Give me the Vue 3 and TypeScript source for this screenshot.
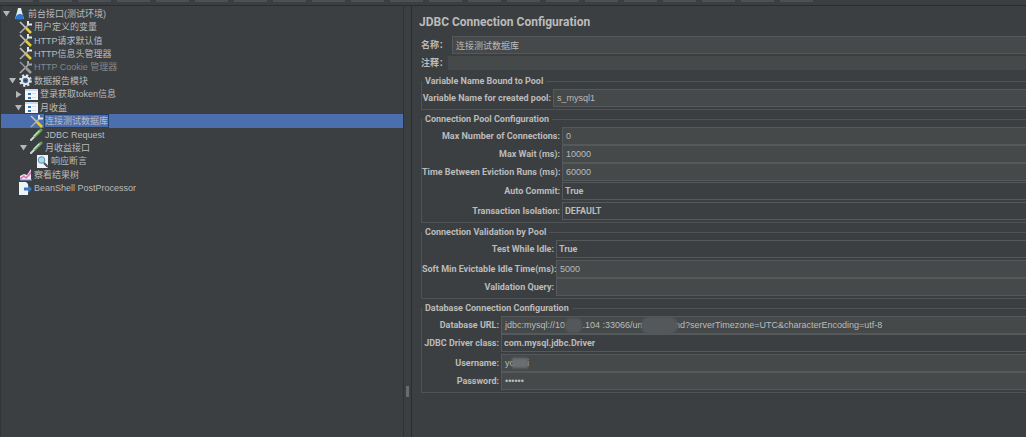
<script setup lang="ts">
import { reactive, ref } from 'vue'

type IconName = 'plan' | 'config' | 'configOff' | 'gear' | 'window' | 'sampler' | 'assert' | 'chart' | 'post'

interface TreeItem {
  label: string
  icon: IconName
  depth: number
  arrow?: 'open' | 'closed'
  disabled?: boolean
}

interface Field {
  id: string
  label: string
  kind: 'text' | 'select' | 'password'
  value: string
  gap?: 'one' | 'two'
  smudges?: string[]
}

interface Group {
  title: string
  size: string
  fields: Field[]
}

const tree: TreeItem[] = [
  { label: '前台接口(测试环境)', icon: 'plan', depth: 0, arrow: 'open' },
  { label: '用户定义的变量', icon: 'config', depth: 1 },
  { label: 'HTTP请求默认值', icon: 'config', depth: 1 },
  { label: 'HTTP信息头管理器', icon: 'config', depth: 1 },
  { label: 'HTTP Cookie 管理器', icon: 'configOff', depth: 1, disabled: true },
  { label: '数据报告模块', icon: 'gear', depth: 1, arrow: 'open' },
  { label: '登录获取token信息', icon: 'window', depth: 2, arrow: 'closed' },
  { label: '月收益', icon: 'window', depth: 2, arrow: 'open' },
  { label: '连接测试数据库', icon: 'config', depth: 3 },
  { label: 'JDBC Request', icon: 'sampler', depth: 3 },
  { label: '月收益接口', icon: 'sampler', depth: 3, arrow: 'open' },
  { label: '响应断言', icon: 'assert', depth: 4 },
  { label: '察看结果树', icon: 'chart', depth: 1 },
  { label: 'BeanShell PostProcessor', icon: 'post', depth: 1 },
]
const selected = ref(8)

const name = ref('连接测试数据库')
const comment = ref('')

const groups = reactive<Group[]>([
  {
    title: 'Variable Name Bound to Pool',
    size: 'pool-name',
    fields: [{ id: 'pool', label: 'Variable Name for created pool:', kind: 'text', value: 's_mysql1' }],
  },
  {
    title: 'Connection Pool Configuration',
    size: 'pool-config',
    fields: [
      { id: 'max', label: 'Max Number of Connections:', kind: 'text', value: '0' },
      { id: 'wait', label: 'Max Wait (ms):', kind: 'text', value: '10000' },
      { id: 'evict', label: 'Time Between Eviction Runs (ms):', kind: 'text', value: '60000' },
      { id: 'commit', label: 'Auto Commit:', kind: 'select', value: 'True', gap: 'one' },
      { id: 'isolation', label: 'Transaction Isolation:', kind: 'select', value: 'DEFAULT', gap: 'two' },
    ],
  },
  {
    title: 'Connection Validation by Pool',
    size: 'validation',
    fields: [
      { id: 'idle', label: 'Test While Idle:', kind: 'select', value: 'True' },
      { id: 'soft', label: 'Soft Min Evictable Idle Time(ms):', kind: 'text', value: '5000', gap: 'two' },
      { id: 'query', label: 'Validation Query:', kind: 'text', value: '' },
    ],
  },
  {
    title: 'Database Connection Configuration',
    size: 'database',
    fields: [
      {
        id: 'url',
        label: 'Database URL:',
        kind: 'text',
        value:
          'jdbc:mysql://10' + ' '.repeat(7) + '.104 :33066/um' + ' '.repeat(12) +
          'nd?serverTimezone=UTC&characterEncoding=utf-8',
        smudges: ['host', 'schema'],
      },
      { id: 'driver', label: 'JDBC Driver class:', kind: 'select', value: 'com.mysql.jdbc.Driver' },
      { id: 'user', label: 'Username:', kind: 'text', value: 'yo' + ' '.repeat(5) + 'i', gap: 'two', smudges: ['user'] },
      { id: 'pass', label: 'Password:', kind: 'password', value: '••••••' },
    ],
  },
])
</script>

<template>
  <div class="app">
    <header class="toolbar">
      <span v-for="n in 21" :key="n" class="tool"></span>
    </header>
    <div class="body">
      <nav class="side" aria-label="Test plan">
        <ul class="tree">
          <li
            v-for="(item, i) in tree"
            :key="i"
            class="node"
            :class="['depth-' + item.depth, { selected: i === selected, disabled: item.disabled }]"
            @click="selected = i"
          >
            <svg class="arrow" viewBox="0 0 7 7" aria-hidden="true">
              <path v-if="item.arrow === 'open'" d="M0 1h7L3.5 6.5z" />
              <path v-else-if="item.arrow === 'closed'" d="M1 0v7l5.500-3.500z" />
            </svg>
            <svg class="icon" viewBox="0 0 13 13" aria-hidden="true">
              <g v-if="item.icon === 'plan'">
                <path d="M5 1h3l1 4 2 7H2l2-7z" fill="#e3ebf2" />
                <path d="M4 8l2-1h2l2 1 1 3c0 2-9 2-9 0z" fill="#2a78d0" />
              </g>
              <g v-else-if="item.icon === 'config' || item.icon === 'configOff'" fill="none">
                <path d="M1 12l8-8" stroke="#a9adaf" stroke-width="1.600" />
                <path d="M9 0v3.500h4" :stroke="item.icon === 'config' ? '#e4e6e7' : '#a4a7a8'" stroke-width="2" />
                <path d="M1 1l6 6" :stroke="item.icon === 'config' ? '#c4c5c0' : '#8f9394'" stroke-width="1.600" />
                <path d="M7 7l5 5" :stroke="item.icon === 'config' ? '#e6cc35' : '#999d9e'" stroke-width="2.600" />
              </g>
              <g v-else-if="item.icon === 'gear'">
                <circle cx="6.500" cy="6.500" r="5.300" fill="none" stroke="#dbe4ec" stroke-width="2.200" stroke-dasharray="2.200 1.960" />
                <circle cx="6.500" cy="6.500" r="3.700" fill="#4b7195" stroke="#e7edf2" stroke-width="2" />
                <circle cx="6.500" cy="6.500" r="1.300" fill="#303b44" />
              </g>
              <g v-else-if="item.icon === 'window'">
                <path d="M0 1h13v11H0z" fill="#f3f7fa" />
                <path d="M0 1h13v2H0z" fill="#c8dbe9" />
                <path d="M3 5h3v2H3zM3 9h3v2H3z" fill="#3978b5" />
                <path d="M7 5h4v1H7zM7 9h4v1H7z" fill="#d5dde2" />
              </g>
              <g v-else-if="item.icon === 'sampler'" fill="none" stroke-linecap="round">
                <path d="M1 12l4-4" stroke="#d6d8d6" stroke-width="2" />
                <path d="M5 8l6-6" stroke="#5fa357" stroke-width="3" />
                <path d="M4 8l5-5" stroke="#d3e3cf" stroke-width="1.200" />
              </g>
              <g v-else-if="item.icon === 'assert'">
                <path d="M1 0h11v13H1z" fill="#edf3f7" />
                <circle cx="5.500" cy="5" r="3.300" fill="#a9d8ef" stroke="#5e8ead" />
                <path d="M8 8l4 4" stroke="#4a4e50" stroke-width="2" />
              </g>
              <g v-else-if="item.icon === 'chart'">
                <path d="M1 8l4-2 3 1 4-6v11H1z" fill="#f3e7f3" />
                <path d="M1 10l4-3 2 2 5-6v3l-5 5-2-2-4 3z" fill="#d276b4" />
                <path d="M1 12h12" stroke="#7599d0" />
              </g>
              <g v-else>
                <path d="M0 0h7l2 2v11H0z" fill="#edf3f7" />
                <path d="M5 5.500h4V3l4 4-4 4V8.500H5z" fill="#3b78bb" />
              </g>
            </svg>
            <span class="label">{{ item.label }}</span>
          </li>
        </ul>
      </nav>
      <div class="divider"><span class="grip"></span></div>
      <main class="panel">
        <h1>JDBC Connection Configuration</h1>
        <div class="line name-line">
          <label for="name">名称：</label>
          <input id="name" v-model="name" type="text" />
        </div>
        <div class="line comment-line">
          <label for="comment">注释：</label>
          <input id="comment" v-model="comment" type="text" />
        </div>
        <fieldset v-for="g in groups" :key="g.title" :class="g.size">
          <legend>{{ g.title }}</legend>
          <div v-for="f in g.fields" :key="f.id" class="row" :class="f.gap">
            <label :for="f.id">{{ f.label }}</label>
            <div class="control">
              <select v-if="f.kind === 'select'" :id="f.id" v-model="f.value">
                <option>{{ f.value }}</option>
              </select>
              <input v-else :id="f.id" v-model="f.value" :type="f.kind" />
              <span v-for="s in f.smudges" :key="s" class="smudge" :class="'smudge-' + s"></span>
            </div>
          </div>
        </fieldset>
      </main>
    </div>
  </div>
</template>

<style>
body {
  background: #3c3f41;
}
</style>

<style scoped>
.app {
  display: flex;
  flex-direction: column;
  min-height: 100vh;
  overflow: hidden;
  background: #3c3f41;
  color: #bbbbbb;
  font: 9px/12px "Liberation Sans", "Noto Sans CJK SC", sans-serif;
}
.toolbar {
  display: flex;
  gap: 6px;
  height: 5px;
  border-bottom: 1px solid #2a2c2e;
}
.tool {
  width: 33px;
  height: 2px;
  background: #4c5052;
}
.body {
  display: flex;
  flex: 1;
}
.side {
  flex: 0 0 404px;
  box-sizing: border-box;
  border-left: 1px solid #323536;
  border-right: 1px solid #2f3233;
}
.tree {
  display: grid;
  grid-template-rows: repeat(14, 1fr);
  height: 188px;
  margin: 1px 0 0;
  padding: 0;
  list-style: none;
}
.node {
  display: flex;
  align-items: center;
  min-height: 0;
  cursor: default;
}
.depth-0 { padding-left: 2px; }
.depth-1 { padding-left: 8px; }
.depth-2 { padding-left: 14px; }
.depth-3 { padding-left: 19px; }
.depth-4 { padding-left: 25px; }
.arrow {
  width: 7px;
  height: 7px;
  fill: #b4b6b7;
}
.icon {
  width: 13px;
  height: 13px;
  margin: 0 2px 0 3px;
}
.label {
  white-space: nowrap;
}
.selected {
  background: #4b6eaf;
}
.selected .label {
  outline: 1px solid #21406f;
}
.disabled .label {
  color: #858789;
}
.divider {
  display: flex;
  flex: 0 0 7px;
  justify-content: center;
  border-right: 1px solid #2a2c2e;
}
.grip {
  width: 3px;
  height: 11px;
  margin-top: 380px;
  background: #696c6e;
}
.panel {
  flex: 1;
  min-width: 0;
  padding: 8px 0 0 9px;
}
h1 {
  margin: 0 0 6px -2px;
  font: bold 12px/16px Roboto, sans-serif;
}
.line {
  display: flex;
  align-items: center;
}
.line label {
  font-weight: bold;
}
.name-line label {
  width: 31px;
}
.comment-line label {
  width: 27px;
}
.comment-line {
  margin: 2px 0 6px;
}
input,
select {
  flex: 1;
  display: block;
  box-sizing: border-box;
  width: 100%;
  min-width: 0;
  height: 18px;
  margin: 0;
  padding: 0 3px;
  border: 1px solid #55595b;
  border-right: 0;
  border-radius: 0;
  outline: 0;
  background: #45494a;
  color: #bbbbbb;
  font: inherit;
}
.comment-line input {
  height: 14px;
  border-color: #45494a;
}
select {
  padding: 0 2px;
  appearance: none;
  background: #3c3f41;
  font: bold 9px/12px Roboto, sans-serif;
}
fieldset {
  min-width: 0;
  margin: 0 0 4px;
  padding: 3px 0 2px;
  border: 1px solid #4f5355;
  border-right: 0;
}
legend {
  height: 10px;
  padding: 0 3px;
  font: bold 9px/10px Roboto, sans-serif;
}
.row {
  display: grid;
  align-items: center;
}
.row label {
  padding-right: 2px;
  text-align: right;
  white-space: nowrap;
  font: bold 9px/12px Roboto, sans-serif;
}
.one { margin-top: 1px; }
.two { margin-top: 2px; }
.pool-name .row { grid-template-columns: 131px 1fr; }
.pool-config .row { grid-template-columns: 140px 1fr; }
.validation .row { grid-template-columns: 134px 1fr; }
.database .row { grid-template-columns: 79px 1fr; }
.control {
  position: relative;
}
.smudge {
  position: absolute;
  background: #54585a;
  filter: blur(1px);
}
.smudge-host {
  top: 2px;
  left: 64px;
  width: 17px;
  height: 15px;
  border-radius: 6px;
}
.smudge-schema {
  top: 1px;
  left: 140px;
  width: 37px;
  height: 17px;
  border-radius: 8px;
}
.smudge-user {
  top: 4px;
  left: 11px;
  width: 16px;
  height: 10px;
  background: #6b6e70;
}
</style>
